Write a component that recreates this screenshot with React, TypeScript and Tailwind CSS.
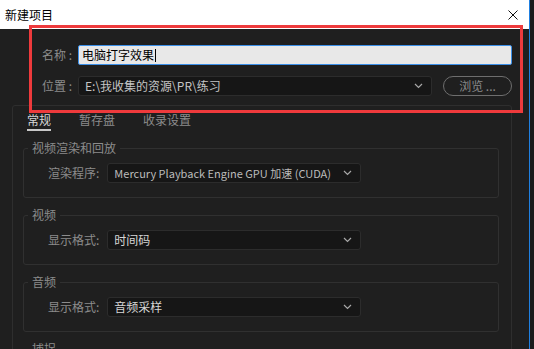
import React from 'react';

function Chevron() {
  return (
    <svg width="9" height="6" viewBox="0 0 9 6" className="shrink-0">
      <polyline points="1,1 4.5,4.5 8,1" fill="none" stroke="#a8a8a8" strokeWidth="1.2" />
    </svg>
  );
}

function Dropdown({ value, className, textClass }: { value: string; className: string; textClass: string }) {
  return (
    <div className={`h-[20px] flex items-center justify-between pl-[6px] pr-[8px] bg-[#161616] border border-[#2c2c2c] rounded-[3px] ${className}`}>
      <span className={`leading-[16px] whitespace-nowrap ${textClass}`}>{value}</span>
      <Chevron />
    </div>
  );
}

function Group({ legend, label, value, textClass }: { legend: string; label: string; value: string; textClass: string }) {
  return (
    <fieldset className="mt-[9px] ml-[10px] mr-[12px] border border-[#303030] rounded-[3px] pl-[4px] pt-[7px] pb-[14px]">
      <legend className="px-[4px] text-[12px] leading-[16px] text-[#8c8c8c]">{legend}</legend>
      <div className="flex items-center pl-[20px]">
        <span className="text-[12px] leading-[16px] text-[#8c8c8c] whitespace-nowrap">{label}:</span>
        <Dropdown value={value} className="ml-[8px] w-[254px]" textClass={textClass} />
      </div>
    </fieldset>
  );
}

export default function App() {
  return (
    <div className="relative w-[534px] h-[349px] overflow-hidden flex bg-[#1b1b1b] font-['Noto_Sans_CJK_SC','Noto_Sans',sans-serif]">
      <div className="w-[530px] h-full flex flex-col border-r border-[#1f7fe0]">
        {/* title bar */}
        <div className="h-[29px] shrink-0 bg-white flex items-center justify-between pl-[5px] pr-[11px]">
          <span className="text-[12px] leading-[16px] text-black">新建项目</span>
          <svg width="10" height="10" viewBox="0 0 10 10">
            <path d="M0.5 0.5 L9.5 9.5 M9.5 0.5 L0.5 9.5" stroke="#111" strokeWidth="1" />
          </svg>
        </div>

        <div className="flex-1 bg-[#1f1f1f] overflow-hidden">
          {/* name */}
          <div className="mt-[16px] flex items-center pl-[42px] pr-[17px]">
            <span className="w-[36px] text-[12px] leading-[16px] text-[#8c8c8c] whitespace-nowrap">名称 :</span>
            <div className="flex-1 h-[20px] flex items-center pl-[3px] bg-[#e8e8e8] border border-[#3b8fe8] rounded-[2px]">
              <span className="text-[12px] leading-[16px] text-black">电脑打字效果</span>
              <span className="ml-[1px] w-[1px] h-[13px] bg-black" />
            </div>
          </div>

          {/* location */}
          <div className="mt-[11px] flex items-center pl-[42px] pr-[17px]">
            <span className="w-[36px] text-[12px] leading-[16px] text-[#8c8c8c] whitespace-nowrap">位置 :</span>
            <Dropdown value="E:\我收集的资源\PR\练习" className="w-[354px]" textClass="text-[12px] text-[#c4c4c4]" />
            <button className="ml-[11px] flex-1 h-[20px] rounded-full border border-[#6e6e6e] text-[12px] leading-[16px] text-[#8a8a8a]">
              浏览 ...
            </button>
          </div>

          {/* settings panel */}
          <div className="mt-[9px] ml-[12px] mr-[17px] h-[300px] border border-[#2e2e2e] rounded-[3px]">
            <div className="flex gap-[28px] pl-[14px] pt-[6px]">
              <span className="pb-[1px] border-b-2 border-[#c8c8c8] text-[12px] leading-[16px] text-[#d6d6d6]">常规</span>
              <span className="text-[12px] leading-[16px] text-[#8c8c8c]">暂存盘</span>
              <span className="text-[12px] leading-[16px] text-[#8c8c8c]">收录设置</span>
            </div>
            <div className="mt-[5px]">
              <Group legend="视频渲染和回放" label="渲染程序" value="Mercury Playback Engine GPU 加速 (CUDA)" textClass="text-[11px] text-[#bcbcbc]" />
              <Group legend="视频" label="显示格式" value="时间码" textClass="text-[12px] text-[#d6d6d6]" />
              <Group legend="音频" label="显示格式" value="音频采样" textClass="text-[12px] text-[#d6d6d6]" />
              <Group legend="捕捉" label="捕捉格式" value="DV" textClass="text-[12px] text-[#d6d6d6]" />
            </div>
          </div>
        </div>
      </div>
      <div className="flex-1 bg-[#1b1b1b]" />

      {/* red annotation frame */}
      <div className="absolute left-[29px] top-[25px] w-[494px] h-[88px] border-[3px] border-[#ee3a3c] pointer-events-none" />
    </div>
  );
}
